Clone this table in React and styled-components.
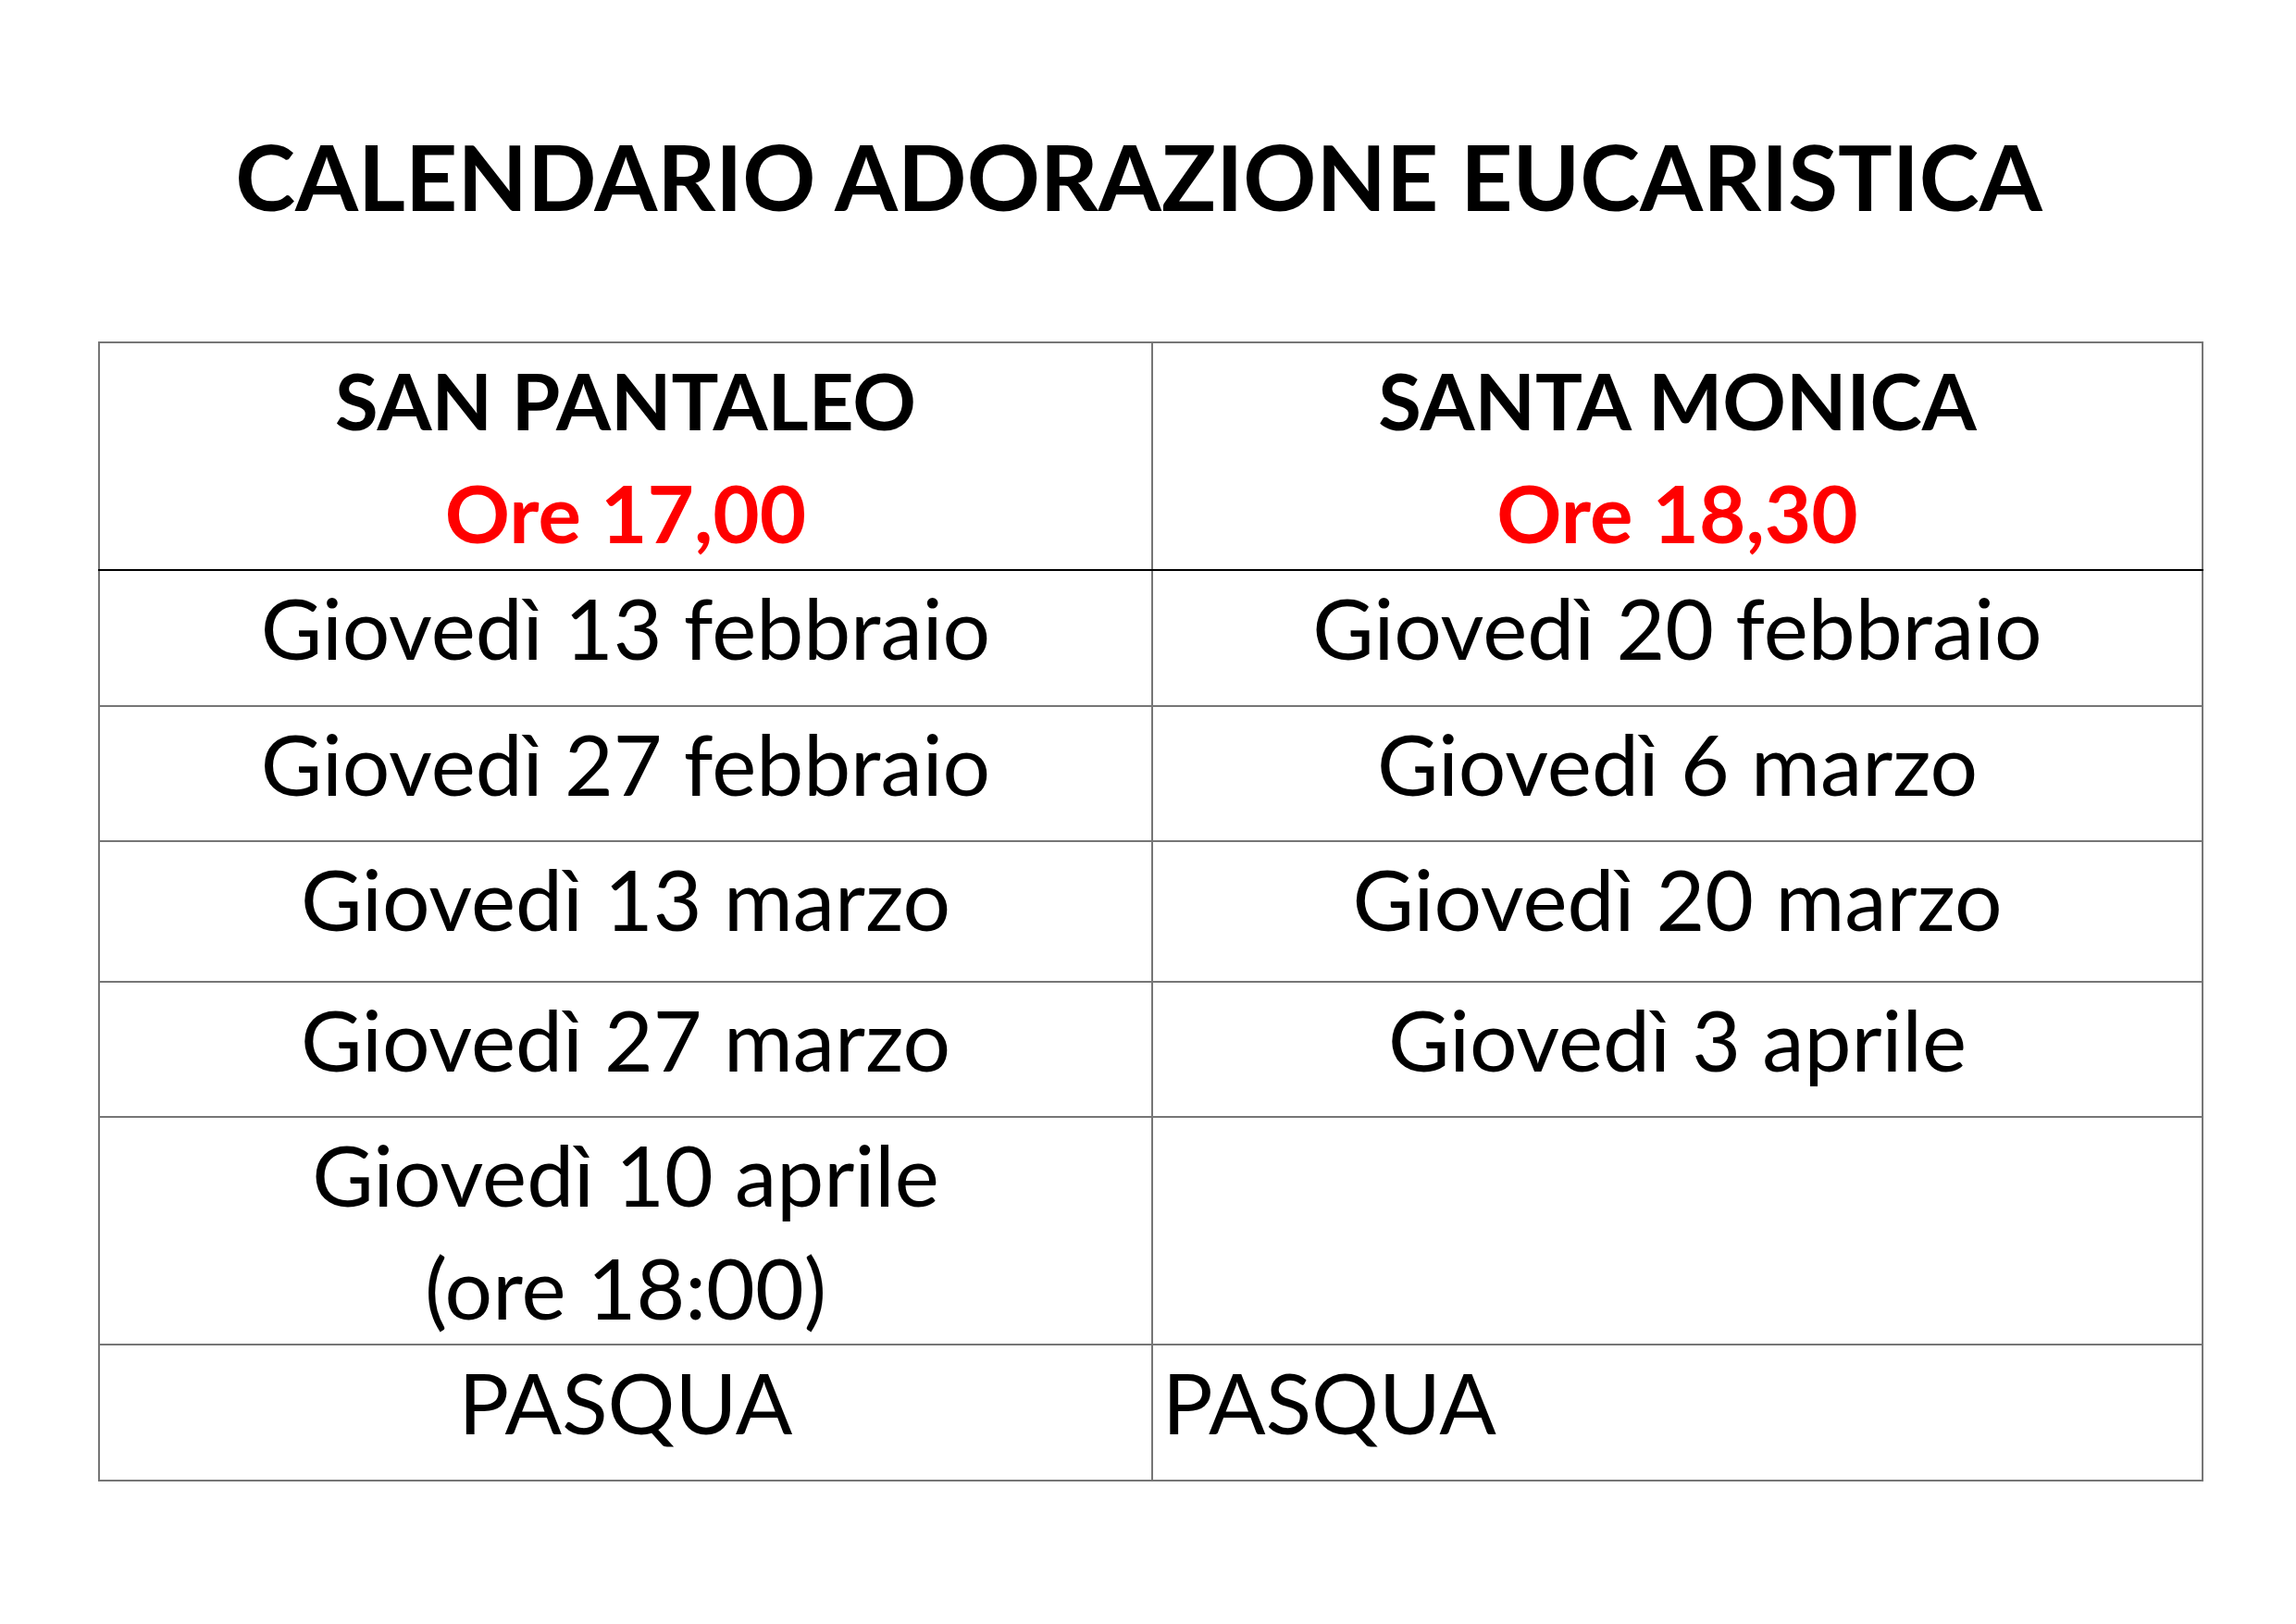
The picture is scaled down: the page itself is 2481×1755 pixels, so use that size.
import React from 'react';
import styled, { createGlobalStyle } from 'styled-components';

const GlobalStyle = createGlobalStyle`
  html, body {
    margin: 0;
    padding: 0;
    background: #ffffff;
  }
  body {
    font-family: Lato, "Open Sans", "Liberation Sans", sans-serif;
    color: #000;
  }
`;

const Page = styled.div`
  width: 2481px;
  height: 1755px;
  box-sizing: border-box;
  padding: 129px 100px 0 106px;
  display: flex;
  flex-direction: column;
`;

const Title = styled.h1`
  margin: 0;
  font-size: 98px;
  line-height: 122px;
  font-weight: 700;
  text-align: center;
  width: 2275px;
  padding-right: 26px;
  box-sizing: border-box;
`;

const Table = styled.table`
  margin-top: 118px;
  width: 2275px;
  border-collapse: collapse;
  table-layout: fixed;
  border: 2px solid #767676;
`;

const Row = styled.tr`
  height: ${(p) => p.$h}px;
`;

const Cell = styled.td`
  border: 2px solid #767676;
  border-bottom-color: ${(p) => (p.$dark ? '#000' : '#767676')};
  vertical-align: top;
  padding: 0 0 0 ${(p) => (p.$left ? '10px' : '0')};
  text-align: ${(p) => (p.$left ? 'left' : 'center')};
  font-size: ${(p) => (p.$bold ? 85 : 91)}px;
  line-height: 122px;
  font-weight: ${(p) => (p.$bold ? 700 : 400)};
`;

const Time = styled.div`
  color: #ff0000;
  font-weight: 700;
  font-size: 87px;
`;

const rows = [
  { h: 147, a: 'Giovedì 13 febbraio', b: 'Giovedì 20 febbraio' },
  { h: 146, a: 'Giovedì 27 febbraio', b: 'Giovedì 6 marzo' },
  { h: 152, a: 'Giovedì 13 marzo', b: 'Giovedì 20 marzo' },
  { h: 146, a: 'Giovedì 27 marzo', b: 'Giovedì 3 aprile' },
  { h: 245, a: ['Giovedì 10 aprile', '(ore 18:00)'], b: '' },
];

export default function App() {
  return (
    <>
      <GlobalStyle />
      <Page>
        <Title>CALENDARIO ADORAZIONE EUCARISTICA</Title>
        <Table>
          <colgroup>
            <col style={{ width: '1138px' }} />
            <col />
          </colgroup>
          <tbody>
            <Row $h={245}>
              <Cell $bold $dark>
                SAN PANTALEO
                <Time>Ore 17,00</Time>
              </Cell>
              <Cell $bold $dark>
                SANTA MONICA
                <Time>Ore 18,30</Time>
              </Cell>
            </Row>
            {rows.map((r, i) => (
              <Row key={i} $h={r.h}>
                <Cell>
                  {Array.isArray(r.a)
                    ? r.a.map((line) => <div key={line}>{line}</div>)
                    : r.a}
                </Cell>
                <Cell>{r.b}</Cell>
              </Row>
            ))}
            <Row $h={147}>
              <Cell>PASQUA</Cell>
              <Cell $left>PASQUA</Cell>
            </Row>
          </tbody>
        </Table>
      </Page>
    </>
  );
}
